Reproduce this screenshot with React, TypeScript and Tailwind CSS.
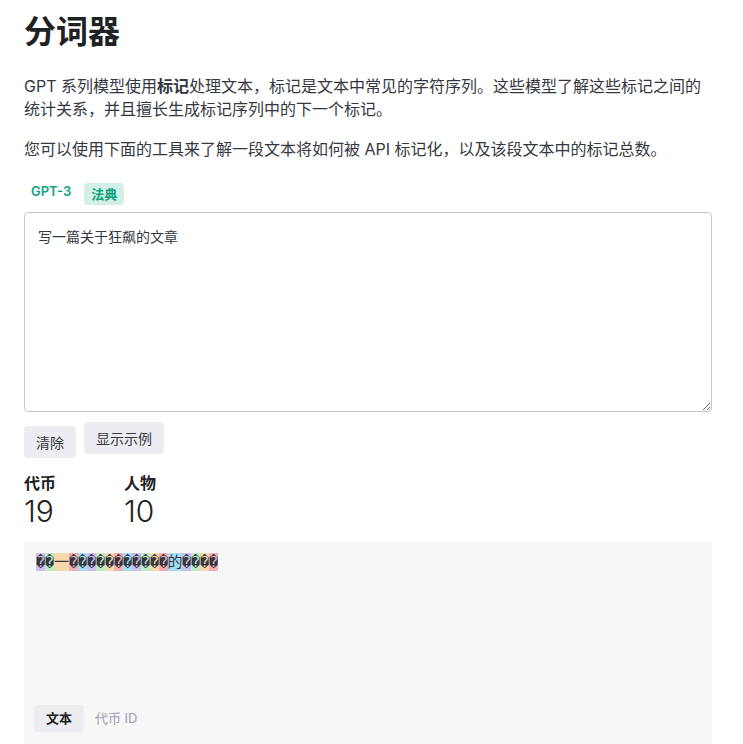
import React from "react";

const COLORS = [
  "bg-[rgba(107,64,216,0.3)]",
  "bg-[rgba(104,222,122,0.4)]",
  "bg-[rgba(244,172,54,0.4)]",
  "bg-[rgba(239,65,70,0.4)]",
  "bg-[rgba(39,181,234,0.4)]",
];

const TOKENS: { t: string; w: string }[] = [
  { t: "\uFFFD", w: "w-[9px]" },
  { t: "\uFFFD", w: "w-[9px]" },
  { t: "\u4E00", w: "w-[15px]" },
  ...Array.from({ length: 11 }, () => ({ t: "\uFFFD", w: "w-[9px]" })),
  { t: "的", w: "w-[14px]" },
  ...Array.from({ length: 4 }, () => ({ t: "\uFFFD", w: "w-[9px]" })),
];

export default function App() {
  return (
    <div
      className="min-h-[744px] bg-white px-6 pt-[10px] text-[#353740]"
      style={{ fontFamily: "Inter, 'Noto Sans CJK SC', sans-serif" }}
    >
      <h1 className="text-[32px] font-semibold leading-[44px] text-[#202123]">分词器</h1>
      <p className="mt-[21px] text-[16px] leading-[23px] pr-2">
        GPT 系列模型使用<b className="font-semibold">标记</b>处理文本，标记是文本中常见的字符序列。这些模型了解这些标记之间的统计关系，并且擅长生成标记序列中的下一个标记。
      </p>
      <p className="mt-[17px] text-[16px] leading-[23px]">
        您可以使用下面的工具来了解一段文本将如何被 API 标记化，以及该段文本中的标记总数。
      </p>
      <div className="mt-[22px] flex items-start gap-[13px] pl-[7px]">
        <span className="mt-[-2px] text-[13px] font-semibold leading-[20px] text-[#10a37f]">GPT-3</span>
        <span className="rounded-[4px] bg-[#d2f0e6] px-[7px] py-[1px] text-[13px] font-semibold leading-[20px] text-[#10a37f]">
          法典
        </span>
      </div>
      <textarea
        className="mt-[7px] block h-[200px] w-[688px] resize-y rounded-[4px] border border-[#c5c5d2] pl-[13px] pr-[13px] pt-[14px] text-[14px] leading-[20px] text-[#353740] outline-none"
        defaultValue="写一篇关于狂飙的文章"
      />
      <div className="mt-[10px] flex items-start gap-2">
        <button className="mt-[4px] h-[32px] rounded-[4px] bg-[#ececf1] px-[12px] text-[14px] text-[#353740]">
          清除
        </button>
        <button className="h-[32px] rounded-[4px] bg-[#ececf1] px-[12px] text-[14px] text-[#353740]">
          显示示例
        </button>
      </div>
      <div className="mt-[14px] flex gap-[68px]">
        <div className="flex flex-col">
          <span className="text-[16px] font-semibold leading-[22px] text-[#202123]">代币</span>
          <span className="text-[30px] font-light leading-[34px] text-[#202123]">19</span>
        </div>
        <div className="flex flex-col">
          <span className="text-[16px] font-semibold leading-[22px] text-[#202123]">人物</span>
          <span className="text-[30px] font-light leading-[34px] text-[#202123]">10</span>
        </div>
      </div>
      <div className="mt-[14px] flex h-[202px] w-[688px] flex-col justify-between bg-[#f7f7f8] px-[12px] pt-[11px] pb-[12px]">
        <div
          className="flex text-[15px] leading-[18px] text-[#353740]"
          style={{ fontFamily: "'DejaVu Sans Mono', 'Noto Sans CJK SC', monospace" }}
        >
          {TOKENS.map((tok, i) => (
            <span
              key={i}
              className={`${tok.w} ${COLORS[i % 5]} inline-flex items-center justify-center`}
            >
              {tok.t}
            </span>
          ))}
        </div>
        <div className="-ml-[2px] flex items-center gap-[11px]">
          <span className="rounded-[4px] bg-[#ececf1] px-[12px] py-[4px] text-[13px] font-semibold leading-[19px] text-[#202123]">
            文本
          </span>
          <span className="text-[13px] font-medium leading-[19px] text-[#acacbe]">代币 ID</span>
        </div>
      </div>
    </div>
  );
}
